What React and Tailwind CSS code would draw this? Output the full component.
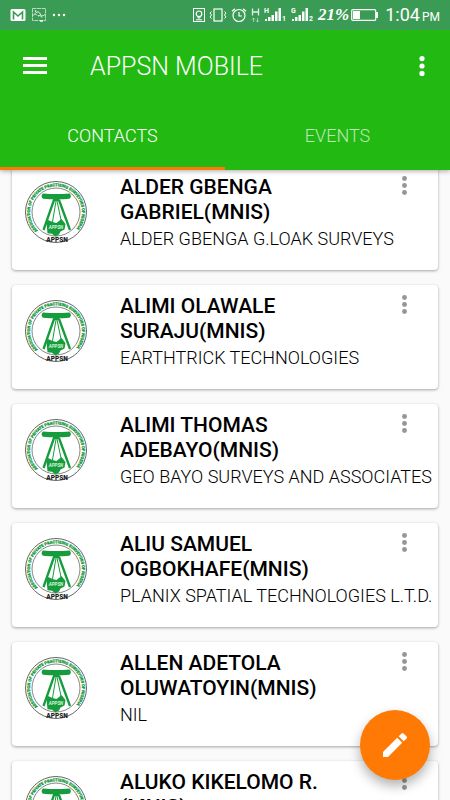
import { useId, useState } from 'react'

const contacts = [
  { name: 'ALDER GBENGA GABRIEL(MNIS)', firm: 'ALDER GBENGA G.LOAK SURVEYS' },
  { name: 'ALIMI OLAWALE SURAJU(MNIS)', firm: 'EARTHTRICK TECHNOLOGIES' },
  { name: 'ALIMI THOMAS ADEBAYO(MNIS)', firm: 'GEO BAYO SURVEYS AND ASSOCIATES' },
  { name: 'ALIU SAMUEL OGBOKHAFE(MNIS)', firm: 'PLANIX SPATIAL TECHNOLOGIES L.T.D.' },
  { name: 'ALLEN ADETOLA OLUWATOYIN(MNIS)', firm: 'NIL' },
  { name: 'ALUKO KIKELOMO R. (MNIS)', firm: 'NIL' },
]

const MailIcon = () => (
  <svg width="16" height="14" viewBox="0 0 16 14">
    <rect x="0.5" y="1" width="15" height="12" rx="1.5" fill="#fff" />
    <path d="M3.5 11.5V4l4.5 4 4.5-4v7.5" fill="none" stroke="#3a9b55" strokeWidth="1.6" />
  </svg>
)

const PictureIcon = () => (
  <svg width="14" height="14" viewBox="0 0 14 14" fill="none" stroke="#fff">
    <rect x="0.5" y="0.5" width="13" height="12" strokeWidth="0.8" strokeDasharray="4 0.6" opacity="0.8" />
    <path d="M1 7.5c1.5-2 3-2 4 0M3.5 5c2-2 4-1 5 1.5s3 1 4.5 0M6 8c2-1 3 0 4 1.5" />
    <path d="M8 13h3" strokeWidth="1.4" />
    <circle cx="3.5" cy="3" r="0.8" fill="#fff" stroke="none" />
  </svg>
)

const CastIcon = () => (
  <svg width="12" height="14" viewBox="0 0 12 14" fill="none" stroke="#fff">
    <rect x="0.5" y="0.5" width="11" height="13" />
    <circle cx="6" cy="5.8" r="2.8" strokeWidth="1.2" />
    <path d="M5 8.5v1.5h2V8.5M3 11.8h6" />
  </svg>
)

const VibrateIcon = () => (
  <svg width="18" height="14" viewBox="0 0 18 14" fill="none" stroke="#fff">
    <rect x="5" y="1" width="8" height="12" strokeWidth="1.2" />
    <path d="M2.5 3.5L1 5l1.5 2L1 9l1.5 1.5M15.5 3.5L17 5l-1.5 2L17 9l-1.5 1.5" />
  </svg>
)

const AlarmIcon = () => (
  <svg width="16" height="16" viewBox="0 0 16 16" fill="none" stroke="#fff" strokeWidth="1.2">
    <circle cx="8" cy="8.5" r="6" />
    <path d="M8 5v4h3M1 4.2L4 1.7M15 4.2L12 1.7" />
  </svg>
)

const DataIcon = () => (
  <svg width="9" height="15" viewBox="0 0 9 15" fill="none" stroke="#fff">
    <path d="M1.5 0.5v7M7.5 0.5v7M1.5 4h6" strokeWidth="1.3" opacity="0.85" />
    <path d="M2.5 14v-4M1 11.5L2.5 10 4 11.5M6.5 10v4M5 12.5L6.5 14 8 12.5" opacity="0.5" />
  </svg>
)

const SignalIcon = ({ network, sim }) => (
  <svg width="23" height="16" viewBox="0 0 23 16" fill="#fff">
    <text x="0" y="6" fontSize="7" fontWeight="700">{network}</text>
    <rect x="1" y="12" width="2" height="2" />
    <rect x="4" y="10" width="2.5" height="4" />
    <rect x="7.5" y="8" width="2.5" height="6" />
    <rect x="11" y="4.5" width="2.5" height="9.5" />
    <rect x="14.5" y="1" width="2.5" height="13" />
    <text x="18" y="14" fontSize="7" fontWeight="700">{sim}</text>
  </svg>
)

const BatteryIcon = () => (
  <svg width="28" height="12" viewBox="0 0 28 12">
    <rect x="0.7" y="0.7" width="24" height="10.6" rx="1" fill="none" stroke="#fff" strokeWidth="1.2" />
    <rect x="2" y="2" width="7" height="8" fill="#fff" />
    <rect x="25" y="3" width="2" height="6" fill="#fff" />
  </svg>
)

const DotsIcon = ({ size }) => (
  <svg width={size} height={size} viewBox="0 0 20 20" fill="currentColor">
    <circle cx="10" cy="2.6" r="2.6" />
    <circle cx="10" cy="10" r="2.6" />
    <circle cx="10" cy="17.4" r="2.6" />
  </svg>
)

const Logo = () => {
  const id = useId()

  return (
    <svg className="w-16 h-16 shrink-0" viewBox="0 0 64 64">
      <circle cx="32" cy="32" r="30.5" fill="#fff" stroke="#666" />
      <circle cx="32" cy="32" r="24" fill="none" stroke="#777" strokeWidth="0.9" />
      <path id={id} d="M13.7 50.8A26 26 0 1 1 50.3 50.8" fill="none" />
      <text fontSize="4" fontWeight="700" fill="#169c3c" stroke="#169c3c" strokeWidth="0.3">
        <textPath href={`#${id}`}>ASSOCIATION OF PRIVATE PRACTISING SURVEYORS OF NIGERIA</textPath>
      </text>
      {/* tripod */}
      <path d="M19 13.5q13 1.2 26.5 0q2.8 2.8 0 5.2q-13.5 1-26.5 0q-2.8-2.4 0-5.2z" fill="#169c3c" />
      <path d="M29 18.5h6.5V21H29z" fill="#169c3c" />
      <path d="M30 20L19.500 50M35 20L46 50" stroke="#169c3c" strokeWidth="2.3" fill="none" />
      <path d="M32 21L28.5 42M33 21L37 40" stroke="#169c3c" strokeWidth="1" fill="none" />
      <path d="M22.5 43l1.5-3 4.5 2 4 1 5-4 4 5-1 5.500-4 2-1.500 3-3.500 2-3.500-2.800-4.500-.5z" fill="#169c3c" />
      <text x="32" y="49" fontSize="4.5" fontWeight="700" fontStyle="italic" fill="#d5f5dc" textAnchor="middle">APPSN</text>
      <text x="33" y="61.5" fontSize="6.5" fontWeight="900" fill="#222" textAnchor="middle">APPSN</text>
    </svg>
  )
}

const StatusBar = () => (
  <div className="h-[30px] bg-[#3a9b55] flex items-center justify-between px-2.5">
    <div className="flex items-center gap-1.5">
      <MailIcon />
      <PictureIcon />
      <svg width="14" height="4" viewBox="0 0 14 4" fill="#fff">
        <circle cx="2" cy="2" r="1.2" />
        <circle cx="7" cy="2" r="1.2" />
        <circle cx="12" cy="2" r="1.2" />
      </svg>
    </div>
    <div className="flex items-center">
      <div className="flex items-center gap-1">
        <CastIcon />
        <VibrateIcon />
        <AlarmIcon />
        <DataIcon />
        <SignalIcon network="H" sim="1" />
        <SignalIcon network="G" sim="2" />
      </div>
      <span className="ml-1 mr-0.5 font-['Liberation_Serif'] italic font-bold text-[17px]">21%</span>
      <BatteryIcon />
      <div className="ml-1.5 flex items-baseline gap-0.5">
        <span className="text-lg">1:04</span>
        <span className="text-xs">PM</span>
      </div>
    </div>
  </div>
)

const ContactCard = ({ contact }) => (
  <li className="flex h-[104px] pl-3 bg-white rounded-sm shadow-[0_1px_3px_rgba(0,0,0,0.35)]">
    <div className="pt-3.5">
      <Logo />
    </div>
    <div className="flex-1 min-w-0 pl-8 pt-[9px]">
      <div className="flex items-start justify-between">
        <h2 className="w-[240px] text-[21px] leading-[25px] font-medium text-black">{contact.name}</h2>
        <button aria-label={`Options for ${contact.name}`} className="mt-px mr-6 text-[#969696]">
          <DotsIcon size={19} />
        </button>
      </div>
      <p className="text-lg leading-[28px] font-light text-black whitespace-nowrap">{contact.firm}</p>
    </div>
  </li>
)

const App = () => {
  const [tab, setTab] = useState('CONTACTS')

  return (
    <div className="relative h-screen flex flex-col overflow-hidden bg-[#fafafa] font-[Roboto,sans-serif]">
      <header className="relative z-10 bg-[#22b913] text-white shadow-[0_1px_5px_rgba(0,0,0,0.35)]">
        <StatusBar />
        <div className="h-[72px] flex items-center pl-[23px] pr-[18px]">
          <button aria-label="Menu">
            <svg width="24" height="18" viewBox="0 0 24 18" fill="#fff">
              <rect width="24" height="3" />
              <rect y="7" width="24" height="3" />
              <rect y="14" width="24" height="3" />
            </svg>
          </button>
          <h1 className="flex-1 ml-[43px] pt-0.5 text-[25px] font-light">APPSN MOBILE</h1>
          <button aria-label="More options">
            <DotsIcon size={20} />
          </button>
        </div>
        <div role="tablist" className="flex h-[68px]">
          {['CONTACTS', 'EVENTS'].map((name) => (
            <button
              key={name}
              role="tab"
              aria-selected={tab === name}
              onClick={() => setTab(name)}
              className={`flex-1 pt-0.5 text-lg font-light border-b-3 ${tab === name ? 'border-[#ff7a05]' : 'border-transparent text-white/70'}`}
            >
              {name}
            </button>
          ))}
        </div>
      </header>

      <main className="flex-1 min-h-0 overflow-hidden">
        <ul className="-mt-1 px-3 flex flex-col gap-[15px]">
          {contacts.map((contact) => (
            <ContactCard key={contact.name} contact={contact} />
          ))}
        </ul>
      </main>

      <button aria-label="Edit" className="absolute right-5 bottom-5 w-[70px] h-[70px] rounded-full bg-[#ff7a05] flex items-center justify-center shadow-[0_6px_12px_rgba(0,0,0,0.3)]">
        <svg width="32" height="32" viewBox="0 0 24 24" fill="#fff">
          <path d="M3 17.25V21h3.75L17.4 10.35l-3.75-3.75L3 17.25zM20.71 7.04a1 1 0 0 0 0-1.41l-2.34-2.34a1 1 0 0 0-1.41 0l-2.2 2.2 3.75 3.75 2.2-2.2z" />
        </svg>
      </button>
    </div>
  )
}

export default App
